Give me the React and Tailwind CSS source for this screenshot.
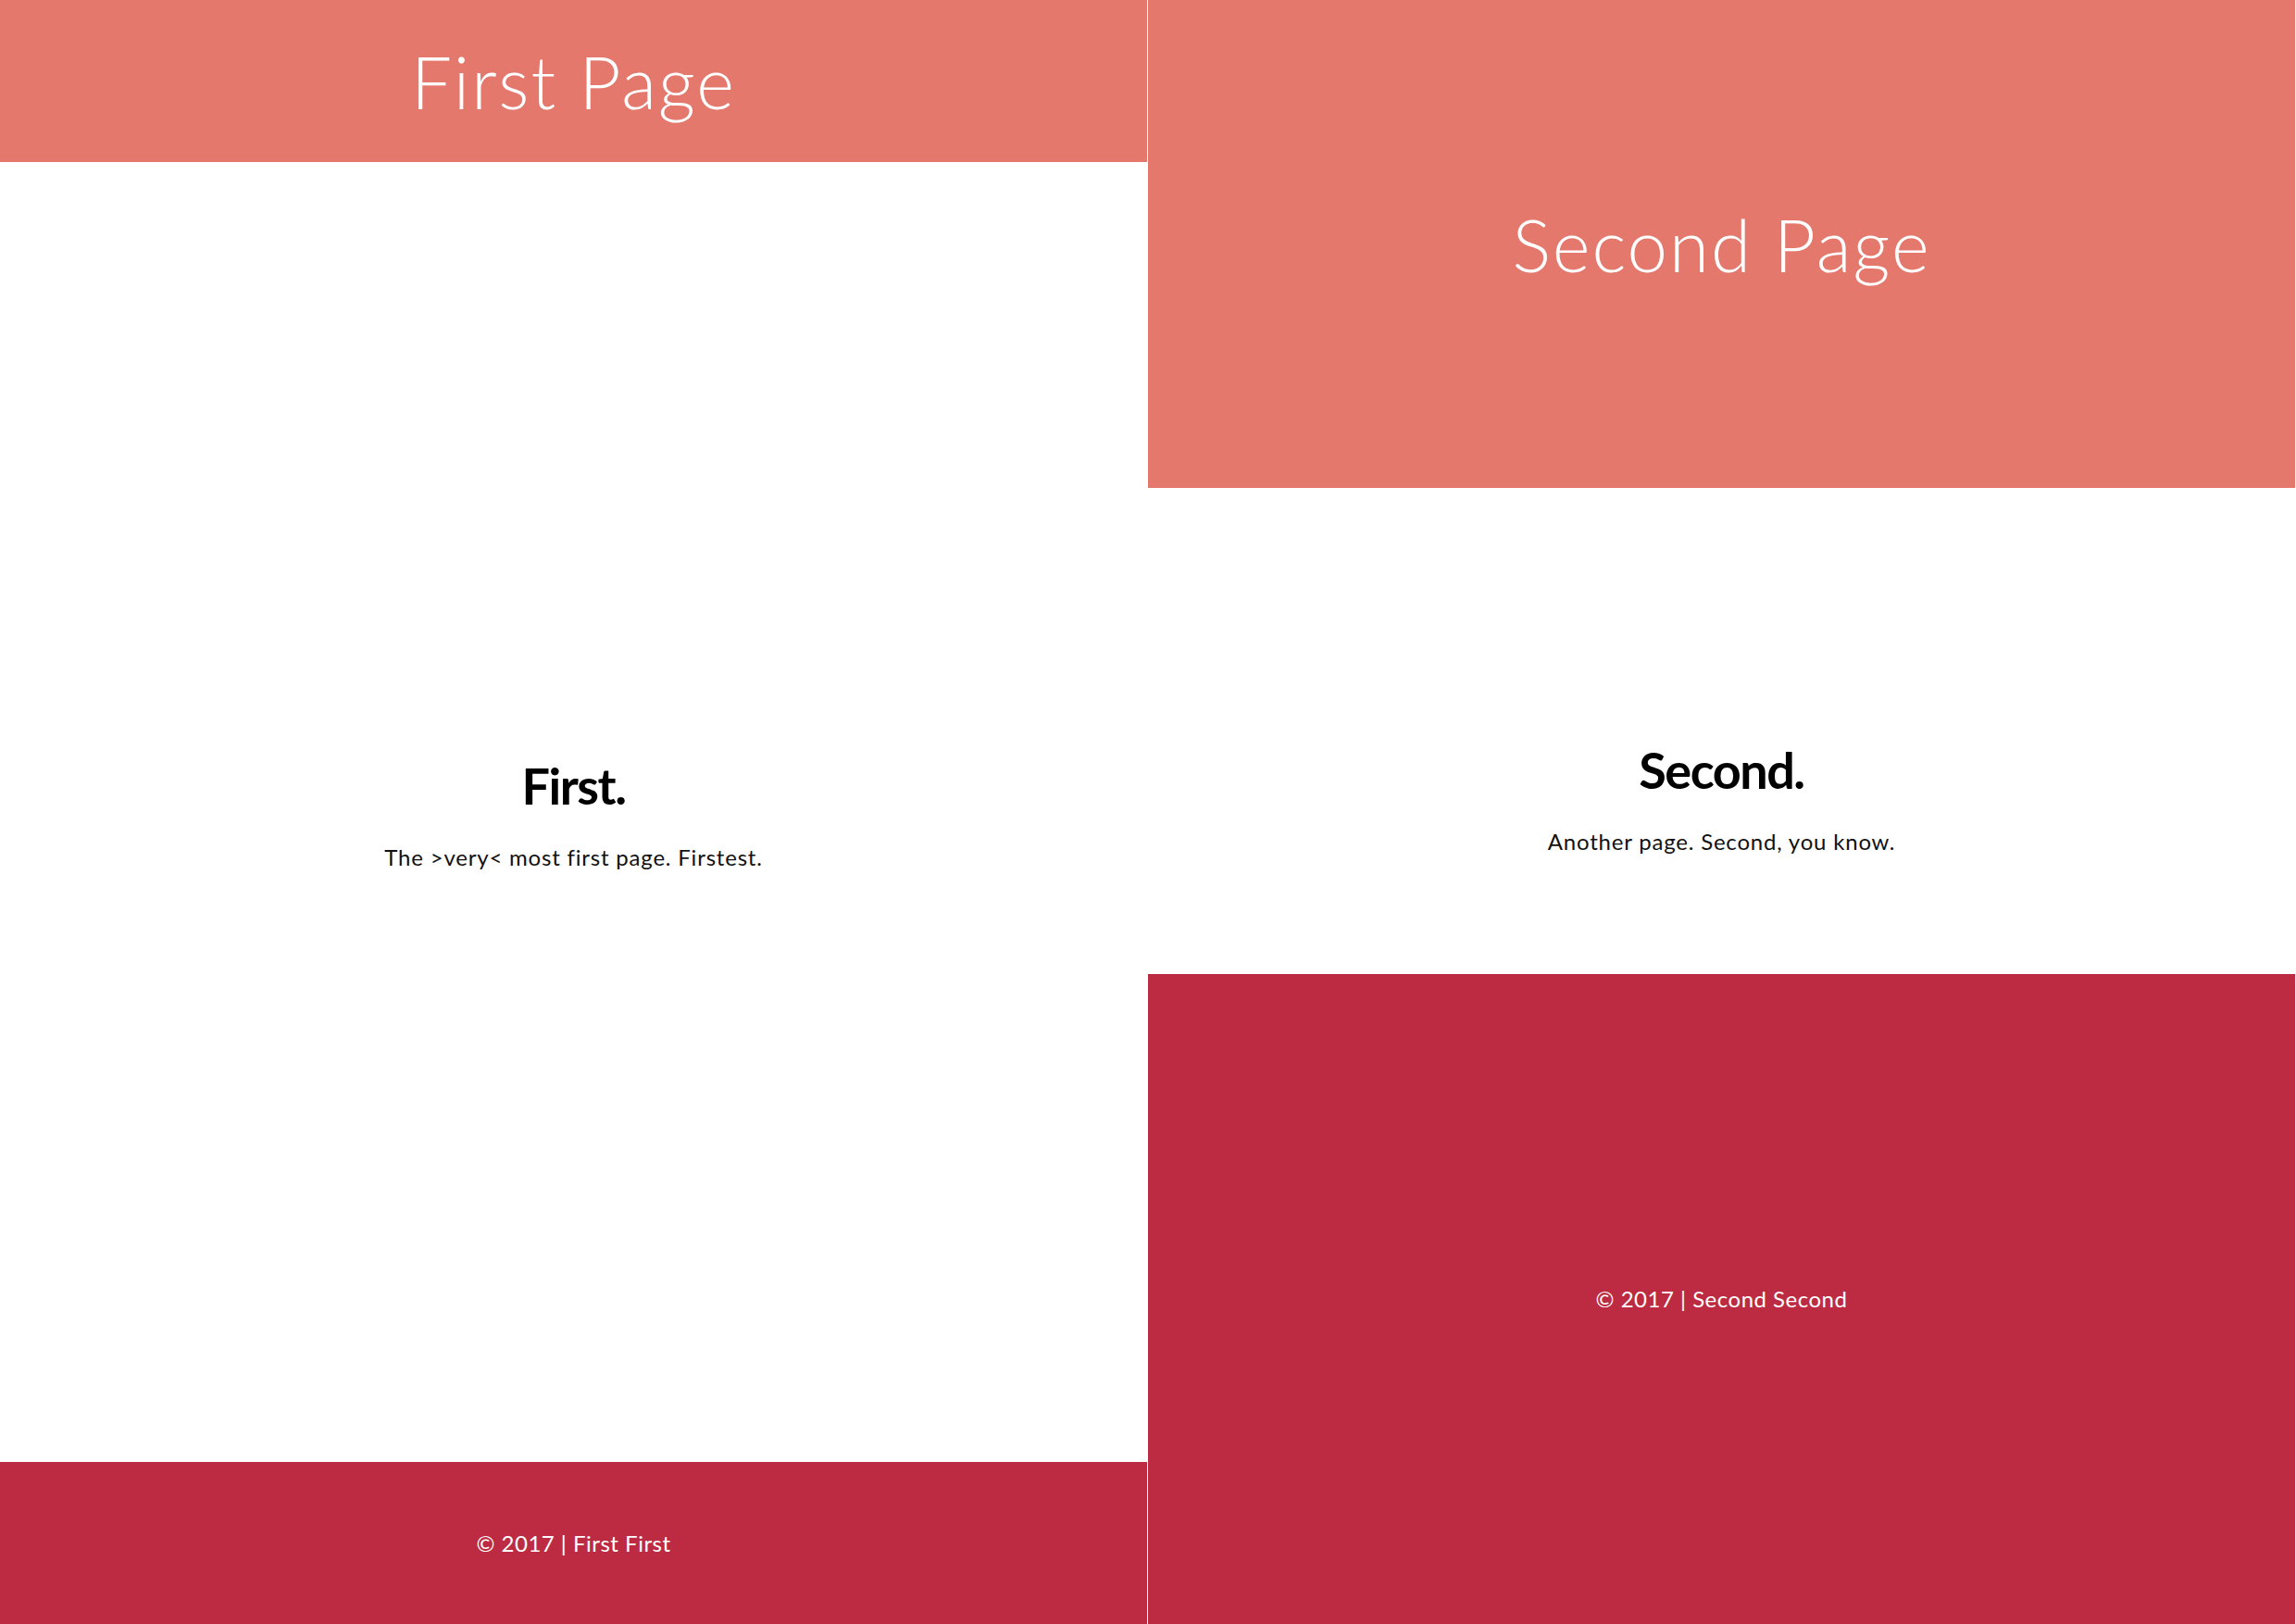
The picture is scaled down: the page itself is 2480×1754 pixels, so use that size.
import React from 'react';

const PAGES = [
    {
        title: 'First Page',
        heading: 'First.',
        text: 'The >very< most first page. Firstest.',
        footer: '© 2017 | First First',
        headerH: 'h-[175px]',
        footerH: 'h-[175px]',
        mainPad: 'pt-[6px]',
    },
    {
        title: 'Second Page',
        heading: 'Second.',
        text: 'Another page. Second, you know.',
        footer: '© 2017 | Second Second',
        headerH: 'h-[527px]',
        footerH: 'h-[702px]',
        mainPad: 'pt-[146px]',
    },
];

function Page({ page }) {
    return (
        <div className="flex h-full w-[1240px] flex-col border-r border-white/30">
            <header className={`flex ${page.headerH} shrink-0 items-center justify-center bg-[#e4786d]`}>
                <h1 className="text-[78px] font-light leading-none tracking-[2px] text-white">{page.title}</h1>
            </header>
            <main className={`flex flex-1 flex-col items-center justify-center bg-white ${page.mainPad}`}>
                <h2 className="text-[54px] font-bold leading-none tracking-[-1.5px] text-black">{page.heading}</h2>
                <p className="mt-[38px] text-[24px] leading-none tracking-[0.8px] text-[#111]">{page.text}</p>
            </main>
            <footer className={`flex ${page.footerH} shrink-0 items-center justify-center bg-[#bd2b42]`}>
                <span className="text-[24px] leading-none tracking-[0.5px] text-white">{page.footer}</span>
            </footer>
        </div>
    );
}

export default function App() {
    return (
        <div className="flex h-[1754px] w-[2480px] bg-white font-['Lato','Liberation_Sans',sans-serif]">
            {PAGES.map((p) => (
                <Page key={p.title} page={p} />
            ))}
        </div>
    );
}
